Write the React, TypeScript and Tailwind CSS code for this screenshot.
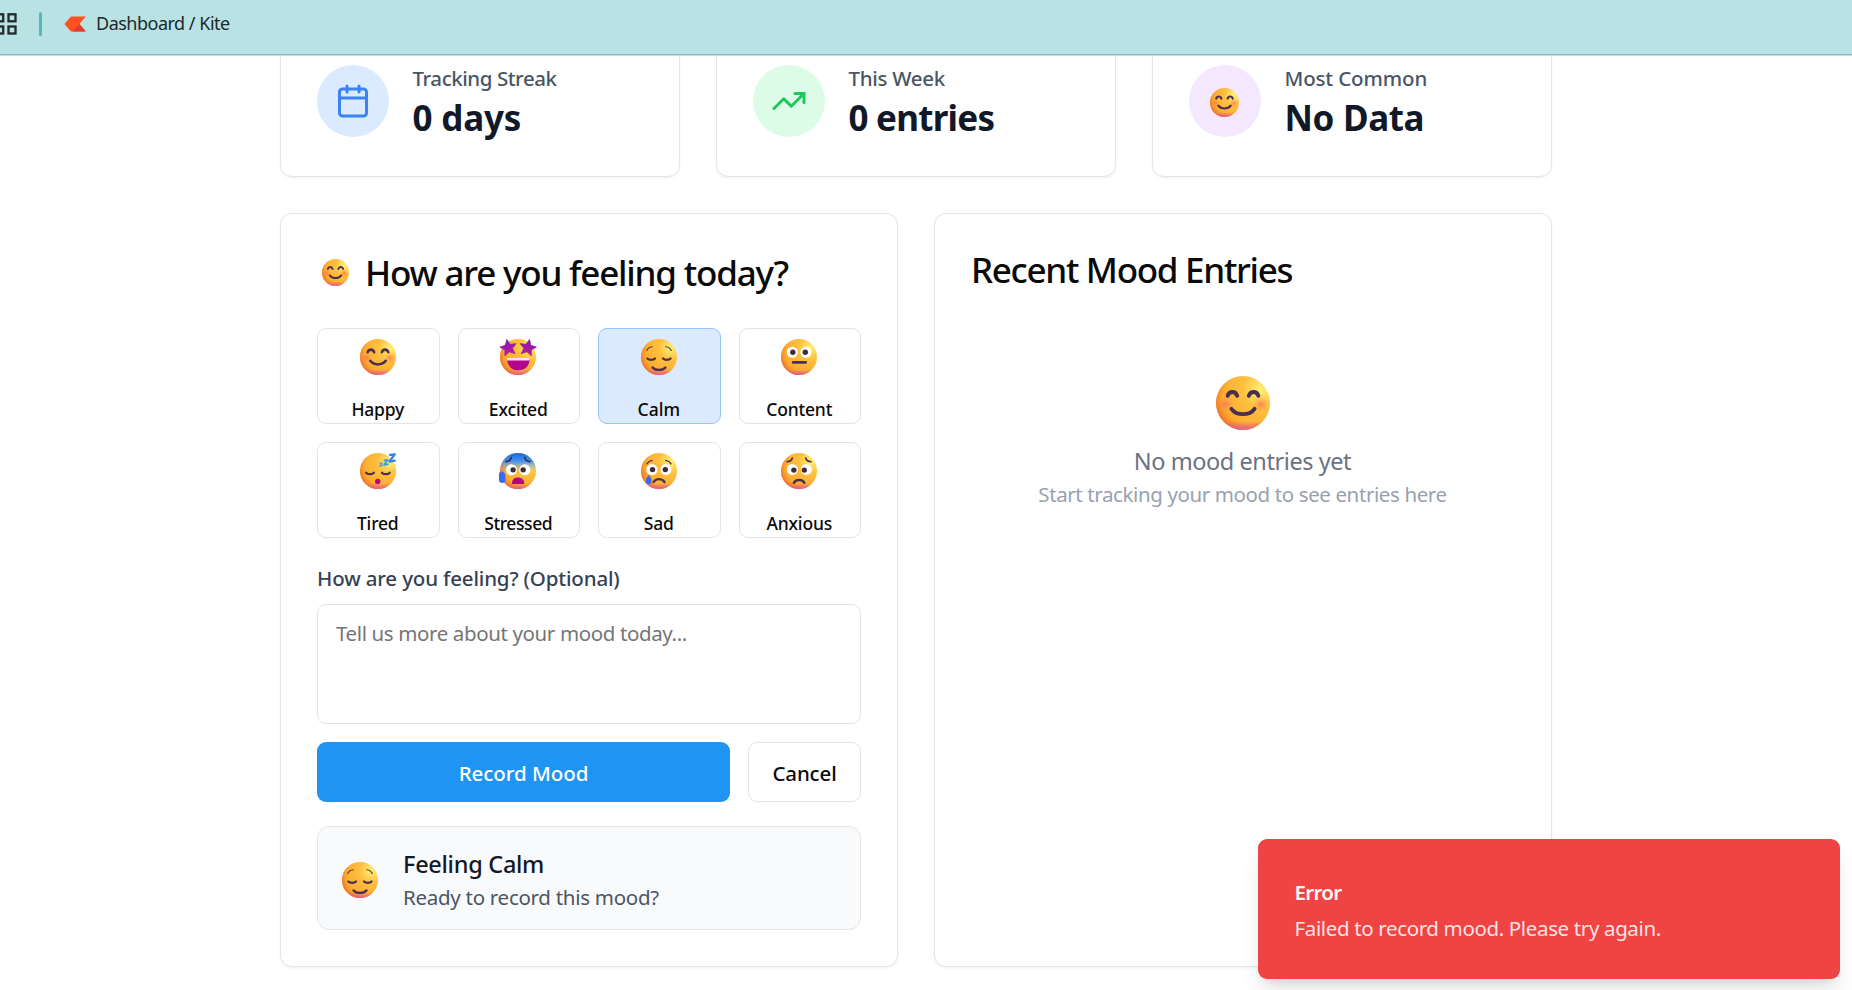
import React, { useId } from "react";
import { Calendar, TrendingUp } from "lucide-react";

type Mood = "happy" | "excited" | "calm" | "content" | "tired" | "stressed" | "sad" | "anxious";

const INK = "#4a3050";

function Eyes({ lx, rx, y, pl, pr, py }: { lx: number; rx: number; y: number; pl: number; pr: number; py: number }) {
  return (
    <g>
      <circle cx={lx} cy={y} r="4.3" fill="#fff" />
      <circle cx={rx} cy={y} r="4.3" fill="#fff" />
      <circle cx={pl} cy={py} r="2.1" fill="#45283c" />
      <circle cx={pr} cy={py} r="2.1" fill="#45283c" />
    </g>
  );
}

const STAR = "M0 -6.6 L1.9 -2.4 L6.4 -2 L3 1 L4 5.5 L0 3.1 L-4 5.5 L-3 1 L-6.4 -2 L-1.9 -2.4 Z";

function Features({ mood, id }: { mood: Mood; id: string }) {
  const line = { fill: "none", stroke: INK, strokeLinecap: "round" as const, strokeLinejoin: "round" as const };
  switch (mood) {
    case "happy":
      return (
        <g>
          <circle cx="7" cy="16.6" r="4" fill={`url(#${id}k)`} />
          <circle cx="25.2" cy="16.6" r="4" fill={`url(#${id}k)`} />
          <g {...line} strokeWidth="2">
            <path d="M8 12.3C8.8 9.6 12.2 9.6 13 12.3" />
            <path d="M19 12.3C19.8 9.6 23.2 9.6 24 12.3" />
            <path d="M10 19C12.6 22.7 19.4 22.7 22 19" />
          </g>
        </g>
      );
    case "excited":
      return (
        <g>
          <path d="M7.4 16.8h17.8c0 5.8-3.6 9.6-8.9 9.6S7.4 22.6 7.4 16.8Z" fill="#b5048c" />
          <path d="M7.4 16.8h17.8q0 1.1-.3 2H7.7Q7.4 17.9 7.4 16.8Z" fill="#f3e3f3" />
          <path d={STAR} transform="translate(8.6 8.9) rotate(-12)" fill={`url(#${id}s)`} stroke={`url(#${id}s)`} strokeWidth="0.6" strokeLinejoin="round" />
          <path d={STAR} transform="translate(23.6 8.9) rotate(12)" fill={`url(#${id}s)`} stroke={`url(#${id}s)`} strokeWidth="0.6" strokeLinejoin="round" />
        </g>
      );
    case "calm":
      return (
        <g {...line}>
          <g strokeWidth="0.9">
            <path d="M6.5 10.9C7.3 9.1 8.8 8.2 10.7 8" />
            <path d="M25.5 10.9C24.7 9.1 23.2 8.2 21.3 8" />
          </g>
          <g strokeWidth="1.8">
            <path d="M7 17.2C8.3 18.6 11.5 18.6 12.9 17.2" />
            <path d="M19.1 17.2C20.5 18.6 23.7 18.6 25 17.2" />
            <path d="M11 24.1C13.3 26.7 18.7 26.7 21 24.1" />
          </g>
        </g>
      );
    case "content":
      return (
        <g>
          <Eyes lx={10.8} rx={21.3} y={12.3} pl={11.2} pr={20.9} py={12.3} />
          <path {...line} strokeWidth="2" d="M11.4 20.2h9.8" />
        </g>
      );
    case "tired":
      return (
        <g>
          <g {...line} strokeWidth="1.7">
            <path d="M6.8 17.3C8.2 18.9 11.3 18.9 12.8 17.3" />
            <path d="M19.1 17.3C20.5 18.9 23.6 18.9 25.1 17.3" />
          </g>
          <circle cx="15.8" cy="24.2" r="2.1" fill="#b5048c" />
          <g {...line}>
            <path stroke="#2e86f0" strokeWidth="1.8" d="M25.3 3.5L29 3L24.9 8.7L29 8" />
            <path stroke="#2f9cf4" strokeWidth="1.3" d="M21 7.7L23.7 7.3L20.7 11.2L23.7 10.7" />
            <path stroke="#55a7dc" strokeWidth="1" d="M17.5 9.9L19.3 9.7L17.3 12.2L19.4 11.9" />
          </g>
        </g>
      );
    case "stressed":
      return (
        <g>
          <rect x="0" y="0" width="32" height="17" fill={`url(#${id}b)`} clipPath={`url(#${id}c)`} />
          <g {...line} strokeWidth="1.2" stroke="#2b2a55">
            <path d="M6.6 8.7C8.8 8.6 10.3 7.5 10.7 5.6" />
            <path d="M25.4 8.7C23.2 8.6 21.7 7.5 21.3 5.6" />
          </g>
          <Eyes lx={10.9} rx={21.3} y={15.1} pl={12.2} pr={20} py={15.1} />
          <path d="M11.3 25.5C11.3 22.6 13.3 21 16 21s4.8 1.6 4.8 4.5c0 .5-.3.6-.8.6h-7.9c-.5 0-.8-.1-.8-.6Z" fill="#b5048c" />
          <path d="M1.2 18.5C1.2 17 2.2 16.3 3.6 16.3S6 17.6 6.2 19.5V23c0 1.5-1 2.3-2.5 2.3S1.2 24.4 1.2 23Z" fill="#3b68f2" />
        </g>
      );
    case "sad":
      return (
        <g>
          <g {...line} strokeWidth="1">
            <path d="M6.6 10.5C7.5 8.9 8.9 8 10.7 7.7" />
            <path d="M25.4 10.5C24.5 8.9 23.1 8 21.3 7.7" />
          </g>
          <Eyes lx={10.5} rx={21.4} y={14.9} pl={11} pr={20.9} py={14.9} />
          <path {...line} strokeWidth="1.8" d="M11.8 24.6C13.5 21.5 18.5 21.5 20.3 24.6" />
          <path d="M8 19.2C9.4 20.7 10.2 22.2 10.2 23.8S9.3 26.3 8 26.3S5.8 25.4 5.8 23.8S6.6 20.7 8 19.2Z" fill="#3b68f2" />
        </g>
      );
    default:
      return (
        <g>
          <g {...line} strokeWidth="1.3">
            <path d="M6.6 8.8C8.8 8.7 10.3 7.8 10.8 5.9" />
            <path d="M25.4 8.8C23.2 8.7 21.7 7.8 21.2 5.9" />
          </g>
          <Eyes lx={10.8} rx={21.7} y={14.8} pl={12} pr={20.1} py={15.3} />
          <path {...line} strokeWidth="1.9" d="M12 25.2C13.7 22.3 18.5 22.3 20.2 25.2" />
        </g>
      );
  }
}

function Emoji({ mood, className }: { mood: Mood; className: string }) {
  const id = useId().replace(/[^a-zA-Z0-9]/g, "");
  return (
    <svg viewBox="2 2 28 28" className={`shrink-0 overflow-visible ${className}`} aria-hidden="true">
      <defs>
        <radialGradient id={`${id}f`} gradientUnits="userSpaceOnUse" cx="25" cy="9" r="23">
          <stop offset="0" stopColor="#fff176" />
          <stop offset="0.4" stopColor="#ffc03f" />
          <stop offset="1" stopColor="#fca82c" />
        </radialGradient>
        <radialGradient id={`${id}e`} gradientUnits="userSpaceOnUse" cx="19" cy="13.5" r="18.5">
          <stop offset="0.7" stopColor="#f08423" stopOpacity="0" />
          <stop offset="1" stopColor="#e4613c" stopOpacity="0.9" />
        </radialGradient>
        <linearGradient id={`${id}p`} x1="0" y1="0" x2="0" y2="1">
          <stop offset="0.84" stopColor="#e5559b" stopOpacity="0" />
          <stop offset="1" stopColor="#e5559b" stopOpacity="0.85" />
        </linearGradient>
        <radialGradient id={`${id}k`}>
          <stop offset="0" stopColor="#ff6a58" stopOpacity="0.75" />
          <stop offset="1" stopColor="#ff8a58" stopOpacity="0" />
        </radialGradient>
        <linearGradient id={`${id}s`} x1="0" y1="0" x2="0" y2="1">
          <stop offset="0" stopColor="#7d1bb5" />
          <stop offset="1" stopColor="#c2189c" />
        </linearGradient>
        <linearGradient id={`${id}b`} x1="0" y1="0" x2="0" y2="1">
          <stop offset="0.2" stopColor="#1f6fe0" />
          <stop offset="0.5" stopColor="#4b93f0" />
          <stop offset="0.95" stopColor="#8fb0d0" stopOpacity="0" />
        </linearGradient>
        <clipPath id={`${id}c`}>
          <circle cx="16" cy="16" r="14" />
        </clipPath>
      </defs>
      <circle cx="16" cy="16" r="14" fill={`url(#${id}f)`} />
      <circle cx="16" cy="16" r="14" fill={`url(#${id}e)`} />
      <circle cx="16" cy="16" r="14" fill={`url(#${id}p)`} />
      <Features mood={mood} id={id} />
    </svg>
  );
}

const moods: { mood: Mood; label: string; tracking: string }[] = [
  { mood: "happy", label: "Happy", tracking: "tracking-[-0.2px]" },
  { mood: "excited", label: "Excited", tracking: "tracking-[-0.12px]" },
  { mood: "calm", label: "Calm", tracking: "tracking-normal" },
  { mood: "content", label: "Content", tracking: "tracking-[-0.2px]" },
  { mood: "tired", label: "Tired", tracking: "tracking-[-0.2px]" },
  { mood: "stressed", label: "Stressed", tracking: "tracking-[-0.4px]" },
  { mood: "sad", label: "Sad", tracking: "tracking-[-0.15px]" },
  { mood: "anxious", label: "Anxious", tracking: "tracking-[-0.18px]" },
];

const card = "rounded-xl border border-[#e5e5e5] bg-white shadow-[0_1px_3px_rgba(0,0,0,0.06)]";

function Stat({ tint, icon, label, labelTracking, value, valueTracking }: {
  tint: string; icon: React.ReactNode; label: string; labelTracking: string; value: string; valueTracking: string;
}) {
  return (
    <div className={`flex h-[152px] items-center gap-[23.5px] px-9 ${card}`}>
      <div className={`flex size-[72px] items-center justify-center rounded-full ${tint}`}>{icon}</div>
      <div className="h-[78px] pt-px">
        <p className={`text-[20.5px] leading-[30px] font-medium text-gray-600 ${labelTracking}`}>{label}</p>
        <p className={`pt-px text-[35px] leading-[48px] font-bold text-[#111827] ${valueTracking}`}>{value}</p>
      </div>
    </div>
  );
}

function Header() {
  return (
    <header className="relative z-10 flex h-14 items-start border-b border-[#b8e2e4] bg-[#b8e2e4] shadow-[inset_0_-1px_0_#8db6ba]">
      <svg className="mt-3 h-6 w-[17px]" viewBox="0 0 17 24" fill="none" stroke="#222a2c" strokeWidth="2.3">
        <rect x="-3.8" y="2.3" width="7" height="7" />
        <rect x="8.5" y="2.3" width="7" height="7" />
        <rect x="-3.8" y="14.5" width="7" height="7" />
        <rect x="8.5" y="14.5" width="7" height="7" />
      </svg>
      <div className="mt-3 ml-[22px] h-6 w-[3px] rounded-full bg-[#57b7bf]" />
      <svg className="mt-4 ml-[22px] h-4 w-[22px]" viewBox="0 0 22 16">
        <path d="M.3 8 7 .4h14.8L15.4 8l6.4 7.5H7Z" fill="#fc521f" />
        <path d="M15.4 8l6.4 7.5H8.5Z" fill="#e33b30" />
      </svg>
      <span className="mt-[9px] ml-[10px] text-lg leading-7 tracking-[-0.5px] text-[#20292b]">Dashboard / Kite</span>
    </header>
  );
}

export default function App() {
  return (
    <div className="relative h-[990px] overflow-hidden bg-white font-['Noto_Sans','Open_Sans',sans-serif] text-[#0a0a0a]">
      <Header />
      <main className="-mt-[31px] ml-[280px] flex w-[1272px] flex-col gap-9">
        <section className="grid grid-cols-3 gap-9">
          <Stat
            tint="bg-[#dbeafe]"
            icon={<Calendar className="size-9 text-[#3b82f6]" />}
            label="Tracking Streak"
            labelTracking="tracking-[-0.45px]"
            value="0 days"
            valueTracking="tracking-[-0.2px]"
          />
          <Stat
            tint="bg-[#dcfce7]"
            icon={<TrendingUp className="size-9 text-[#22c55e]" />}
            label="This Week"
            labelTracking="tracking-[-0.3px]"
            value="0 entries"
            valueTracking="tracking-[-0.75px]"
          />
          <Stat
            tint="bg-[#f3e8ff]"
            icon={<Emoji mood="happy" className="mt-[3px] mr-px size-[29px]" />}
            label="Most Common"
            labelTracking="tracking-[-0.15px]"
            value="No Data"
            valueTracking="tracking-[-0.35px]"
          />
        </section>

        <section className="grid grid-cols-2 gap-9">
          <div className={`h-[754px] p-9 ${card}`}>
            <div className="mb-[33px] flex h-[45px] items-center gap-3">
              <div className="flex w-9 justify-center">
                <Emoji mood="happy" className="size-[27px]" />
              </div>
              <h2 className="text-[35px] leading-[45px] font-medium tracking-[-1.2px] whitespace-nowrap">How are you feeling today?</h2>
            </div>

            <div className="grid grid-cols-4 gap-[18px]">
              {moods.map(({ mood, label, tracking }) => (
                <button
                  key={mood}
                  className={`flex h-24 flex-col items-center rounded-[9px] border pt-[10px] pr-px ${
                    mood === "calm" ? "border-[#93c5fd] bg-[#dbeafe]" : "border-[#e5e5e5] bg-white"
                  }`}
                >
                  <Emoji mood={mood} className="size-9" />
                  <span className={`mt-[22px] text-[17.5px] leading-6 font-medium ${tracking}`}>{label}</span>
                </button>
              ))}
            </div>

            <label className="mt-[25px] mb-[11px] block text-[20.5px] leading-[30px] font-medium tracking-[-0.16px] text-gray-700">
              How are you feeling? (Optional)
            </label>
            <textarea
              className="block h-[120px] w-full resize-none rounded-[9px] border border-[#e5e5e5] bg-white px-[18px] pt-[13px] text-[20.5px] leading-[30px] tracking-[-0.38px] placeholder:text-[#757575]"
              placeholder="Tell us more about your mood today..."
            />

            <div className="mt-[18px] flex gap-[18px]">
              <button className="h-[60px] flex-1 rounded-[9px] bg-[#2094f3] pt-0.5 text-[20.5px] font-medium tracking-[-0.05px] text-white">Record Mood</button>
              <button className="h-[60px] w-[113px] rounded-[9px] border border-[#e5e5e5] bg-white pt-0.5 text-[20.5px] font-medium tracking-[-0.15px]">Cancel</button>
            </div>

            <div className="mt-6 flex h-[104px] items-center gap-[25px] rounded-xl border border-[#e5e5e5] bg-[#f9fafb] px-6 pt-[5px]">
              <Emoji mood="calm" className="mb-0.5 size-9" />
              <div>
                <p className="text-[23.5px] leading-[33px] font-medium tracking-[-0.28px] text-[#111827]">Feeling Calm</p>
                <p className="text-[20.5px] leading-[33px] tracking-[-0.28px] text-gray-600">Ready to record this mood?</p>
              </div>
            </div>
          </div>

          <div className={`flex h-[754px] flex-col p-9 ${card}`}>
            <h2 className="text-[35px] leading-10 font-medium tracking-[-1.3px]">Recent Mood Entries</h2>
            <div className="mt-[86px] flex flex-col items-center pr-px">
              <Emoji mood="happy" className="size-[54px]" />
              <p className="mt-[13px] text-[23.5px] leading-9 tracking-[-0.43px] text-gray-500">No mood entries yet</p>
              <p className="text-[20.5px] leading-[30px] tracking-[-0.39px] text-gray-400">Start tracking your mood to see entries here</p>
            </div>
          </div>
        </section>
      </main>

      <div className="absolute right-3 bottom-[11px] z-20 h-[140px] w-[582px] rounded-[9px] bg-[#ef4444] px-[36.5px] pt-[38px] shadow-[0_15px_22px_-4px_rgba(0,0,0,0.12),0_6px_9px_-6px_rgba(0,0,0,0.12)]">
        <p className="text-[20.5px] leading-[30px] font-semibold tracking-[-0.7px] text-[#fdf6f6]">Error</p>
        <p className="mt-1.5 text-[20.5px] leading-[30px] tracking-[-0.36px] text-[#fde2e2]">Failed to record mood. Please try again.</p>
      </div>
    </div>
  );
}
